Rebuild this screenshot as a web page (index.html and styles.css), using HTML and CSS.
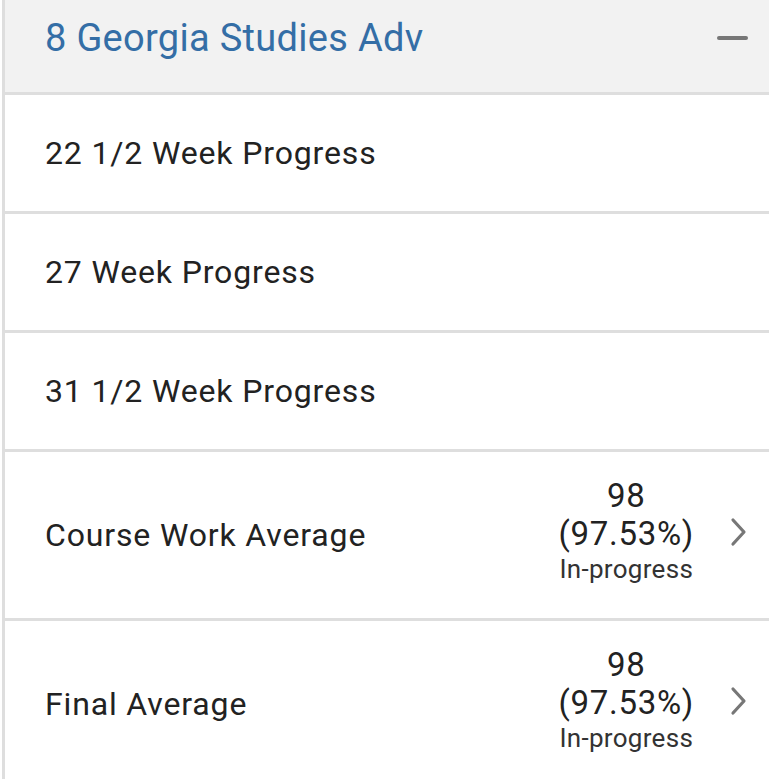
FILE: index.html
```html
<!DOCTYPE html>
<html>
<head>
<meta charset="utf-8">
<link rel="stylesheet" href="styles.css">
</head>
<body>
<div class="panel">
  <div class="panel-header">
    <span class="course-title">8 Georgia Studies Adv</span>
    <span class="collapse-icon"></span>
  </div>
  <div class="row"><span class="row-label">22 1/2 Week Progress</span></div>
  <div class="row"><span class="row-label">27 Week Progress</span></div>
  <div class="row"><span class="row-label">31 1/2 Week Progress</span></div>
  <div class="row row-grade">
    <span class="row-label">Course Work Average</span>
    <div class="grade">
      <div class="grade-score">98</div>
      <div class="grade-pct">(97.53%)</div>
      <div class="grade-status">In-progress</div>
    </div>
    <svg class="chevron" width="18" height="30" viewBox="0 0 18 30"><path d="M3 3 L14 15 L3 27" fill="none" stroke="#777" stroke-width="3.2" stroke-linecap="round" stroke-linejoin="round"/></svg>
  </div>
  <div class="row row-grade row-last">
    <span class="row-label">Final Average</span>
    <div class="grade">
      <div class="grade-score">98</div>
      <div class="grade-pct">(97.53%)</div>
      <div class="grade-status">In-progress</div>
    </div>
    <svg class="chevron" width="18" height="30" viewBox="0 0 18 30"><path d="M3 3 L14 15 L3 27" fill="none" stroke="#777" stroke-width="3.2" stroke-linecap="round" stroke-linejoin="round"/></svg>
  </div>
</div>
</body>
</html>
```
FILE: styles.css
```css
html, body {
  margin: 0;
  padding: 0;
  background: #fff;
}
body {
  font-family: Roboto, "Noto Sans", sans-serif;
  color: #222;
  width: 769px;
  height: 779px;
  overflow: hidden;
}
.panel {
  margin-left: 2px;
  border-left: 3px solid #dedede;
  min-height: 779px;
}
.panel-header {
  height: 92px;
  background: #f2f2f2;
  border-bottom: 3px solid #dedede;
  display: flex;
  align-items: center;
  justify-content: space-between;
  padding: 0 21px 0 40px;
}
.course-title {
  font-size: 38px;
  letter-spacing: 0.3px;
  color: #346ea6;
  margin-top: -16px;
}
.collapse-icon {
  width: 31px;
  height: 4px;
  border-radius: 2px;
  background: #777;
  margin-top: -16px;
}
.row {
  height: 116px;
  border-bottom: 3px solid #dedede;
  display: flex;
  align-items: center;
  padding: 0 21px 0 40px;
}
.row-label {
  font-size: 32px;
  letter-spacing: 0.85px;
  flex: 1;
}
.row-grade {
  height: 166px;
}
.row-last {
  border-bottom: none;
}
.grade {
  text-align: center;
  margin-right: 36px;
  margin-top: -8px;
}
.grade-score, .grade-pct {
  font-size: 33px;
  letter-spacing: 0.7px;
  line-height: 38px;
}
.grade-status {
  font-size: 26px;
  letter-spacing: 0.3px;
  line-height: 32px;
  color: #333;
}
.chevron {
  display: block;
  margin-top: -7px;
}
```
